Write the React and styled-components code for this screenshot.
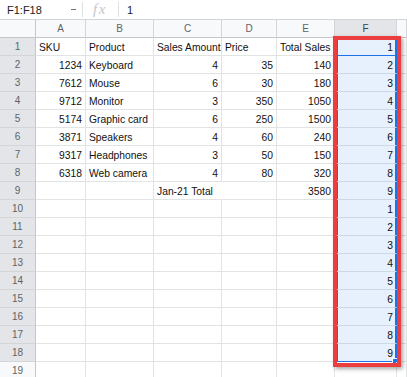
import React from 'react';
import styled, { createGlobalStyle } from 'styled-components';

const columns = ['A', 'B', 'C', 'D', 'E', 'F', ''];

const data = [
	['SKU', 'Product', 'Sales Amount', 'Price', 'Total Sales', 1],
	[1234, 'Keyboard', 4, 35, 140, 2],
	[7612, 'Mouse', 6, 30, 180, 3],
	[9712, 'Monitor', 3, 350, 1050, 4],
	[5174, 'Graphic card', 6, 250, 1500, 5],
	[3871, 'Speakers', 4, 60, 240, 6],
	[9317, 'Headphones', 3, 50, 150, 7],
	[6318, 'Web camera', 4, 80, 320, 8],
	['', '', 'Jan-21 Total', '', 3580, 9],
	['', '', '', '', '', 1],
	['', '', '', '', '', 2],
	['', '', '', '', '', 3],
	['', '', '', '', '', 4],
	['', '', '', '', '', 5],
	['', '', '', '', '', 6],
	['', '', '', '', '', 7],
	['', '', '', '', '', 8],
	['', '', '', '', '', 9],
	['', '', '', '', '', ''],
];

const SELECTED_COL = 5;
const SELECTED_ROWS = 18;

function App() {
	return (
		<>
			<GlobalStyle />
			<Page>
				<FormulaBar>
					<NameBox>
						F1:F18
						<Caret />
					</NameBox>
					<Divider />
					<Fx>fx</Fx>
					<Divider />
					<Formula>1</Formula>
				</FormulaBar>
				<SheetStack>
					<Sheet>
						<Corner />
						{columns.map((c, i) => (
							<ColHead key={i} $active={i === SELECTED_COL}>
								{c}
							</ColHead>
						))}
						{data.map((row, r) => (
							<React.Fragment key={r}>
								<RowHead $active={r < SELECTED_ROWS}>{r + 1}</RowHead>
								{row.map((value, c) => {
									const selected = c === SELECTED_COL && r < SELECTED_ROWS;
									return (
										<Cell
											key={c}
											$numeric={typeof value === 'number'}
											$selected={selected}
											$active={selected && r === 0}
											$last={selected && r === SELECTED_ROWS - 1}
											$overflow={r === 8 && c === 2}
										>
											{value}
											{selected && r === SELECTED_ROWS - 1 && <Handle />}
										</Cell>
									);
								})}
								<Cell />
							</React.Fragment>
						))}
					</Sheet>
					<Overlay>
						<Highlight />
					</Overlay>
				</SheetStack>
			</Page>
		</>
	);
}

const GlobalStyle = createGlobalStyle`
	body {
		margin: 0;
		background: #fff;
		font-family: 'Liberation Sans', Arial, sans-serif;
	}
`;

const Page = styled.div`
	width: 407px;
	height: 377px;
	overflow: hidden;
	background: #fff;
`;

const FormulaBar = styled.div`
	display: flex;
	align-items: center;
	height: 19px;
	border-bottom: 1px solid #d4d6d9;
	font-size: 11px;
	color: #202124;
`;

const NameBox = styled.div`
	display: flex;
	align-items: center;
	justify-content: space-between;
	width: 69px;
	padding: 0 6px 0 7px;
`;

const Caret = styled.span`
	width: 5px;
	height: 1.5px;
	background: #777;
`;

const Divider = styled.div`
	width: 1px;
	height: 15px;
	background: #e0e0e0;
`;

const Fx = styled.div`
	width: 35px;
	padding-left: 10px;
	box-sizing: border-box;
	font-family: 'Liberation Serif', serif;
	font-style: italic;
	font-size: 15px;
	color: #c6c6c6;
	letter-spacing: 1.5px;
`;

const Formula = styled.div`
	padding-left: 8px;
`;

const gridTemplate = `
	grid-template-columns: 36px 50px 68px 68px 55px 58px 62px 1fr;
	grid-template-rows: 18px repeat(19, 18px);
`;

const SheetStack = styled.div`
	display: grid;
`;

const Sheet = styled.div`
	grid-area: 1 / 1;
	display: grid;
	${gridTemplate}
	font-size: 10.3px;
	color: #111;
`;

const Overlay = styled.div`
	grid-area: 1 / 1;
	display: grid;
	${gridTemplate}
	pointer-events: none;
	z-index: 2;
`;

const Corner = styled.div`
	background: #f8f9fa;
	border-right: 1px solid #c4c7c5;
	border-bottom: 1px solid #c4c7c5;
`;

const ColHead = styled.div`
	display: flex;
	align-items: center;
	justify-content: center;
	background: ${({ $active }) => ($active ? '#e3e5e8' : '#f8f9fa')};
	border-right: 1px solid #d3d5d7;
	border-bottom: 1px solid #c4c7c5;
	font-size: 10px;
	color: ${({ $active }) => ($active ? '#3c4043' : '#5f6368')};
`;

const RowHead = styled.div`
	display: flex;
	align-items: center;
	justify-content: center;
	background: ${({ $active }) => ($active ? '#e3e5e8' : '#f8f9fa')};
	border-right: 1px solid #c4c7c5;
	border-bottom: 1px solid #d3d5d7;
	font-size: 10px;
	color: #5f6368;
`;

const Cell = styled.div`
	position: relative;
	display: flex;
	align-items: center;
	justify-content: ${({ $numeric }) => ($numeric ? 'flex-end' : 'flex-start')};
	padding: 1px 3px 0 3px;
	white-space: nowrap;
	overflow: ${({ $overflow }) => ($overflow ? 'visible' : 'hidden')};
	border-right: 1px solid ${({ $overflow }) => ($overflow ? 'transparent' : '#e2e3e3')};
	border-bottom: 1px solid #e2e3e3;

	${({ $selected }) =>
		$selected &&
		`
		overflow: visible;
		background: #e7f0fd;
		border-right-color: #1a73e8;
		border-bottom-color: #cdd7e5;
		box-shadow: inset 3px 0 0 #1a73e8, inset -1px 0 0 #1a73e8;
	`}

	${({ $active }) => $active && `border-bottom: 1px solid #1a73e8;`}
	${({ $last }) => $last && `border-bottom: 1px solid #1a73e8;`}
`;

const Handle = styled.span`
	position: absolute;
	right: -2px;
	bottom: -3px;
	width: 4px;
	height: 4px;
	background: #1a73e8;
	border: 1px solid #fff;
`;

const Highlight = styled.div`
	grid-column: 7;
	grid-row: 2 / span 18;
	margin: -2px -4px -5px -2px;
	border: 4px solid #ec3d3f;
	box-shadow: 2px 2px 4px rgba(0, 0, 0, 0.35);
`;

export default App;
